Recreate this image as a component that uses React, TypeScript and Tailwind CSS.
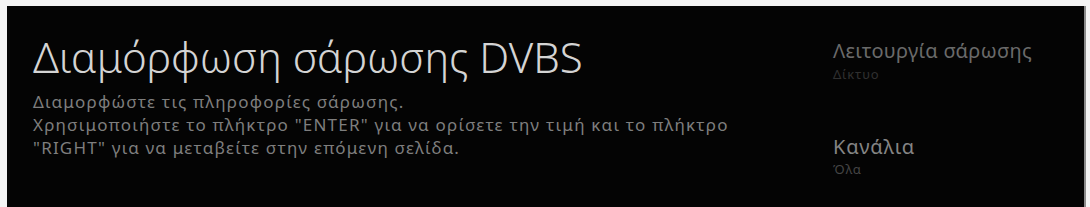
export default function App() {
  return (
    <div className="w-[1090px] h-[207px] bg-[#f4f4f4] pl-[7px] pt-[6px] pr-[4px] overflow-hidden" style={{ fontFamily: '"Noto Sans", "DejaVu Sans", sans-serif' }}>
      <div className="h-full bg-[#040404] border-r-[2px] border-[#8c8c8c] flex">
        <div className="w-[800px] pl-[26px] pt-[25px]">
          <h1 className="text-[42px] leading-[52px] font-light text-[#d4d4d4]">
            Διαμόρφωση σάρωσης DVBS
          </h1>
          <div className="mt-[7px] text-[17px] leading-[23px] tracking-[1.2px] text-[#7e7e7e]">
            <p>Διαμορφώστε τις πληροφορίες σάρωσης.</p>
            <p>Χρησιμοποιήστε το πλήκτρο "ENTER" για να ορίσετε την τιμή και το πλήκτρο</p>
            <p>"RIGHT" για να μεταβείτε στην επόμενη σελίδα.</p>
          </div>
        </div>
        <div className="pl-[26px] pt-[32px] flex flex-col">
          <div className="text-[20px] leading-[26px] tracking-[0.3px] text-[#6a6a6a]">Λειτουργία σάρωσης</div>
          <div className="text-[13px] leading-[20px] tracking-[0.8px] text-[#303030]">Δίκτυο</div>
          <div className="mt-[50px] text-[20px] leading-[26px] tracking-[0.8px] text-[#858585]">Κανάλια</div>
          <div className="text-[13px] leading-[18px] tracking-[0.8px] text-[#464646]">Όλα</div>
        </div>
      </div>
    </div>
  );
}
